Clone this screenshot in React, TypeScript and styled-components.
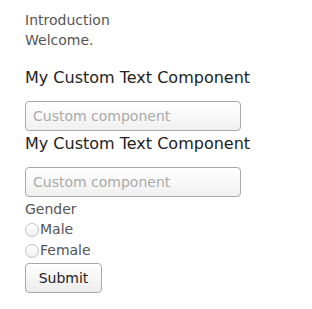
import React from 'react'
import styled, { createGlobalStyle } from 'styled-components'

const GlobalStyle = createGlobalStyle`
    body {
        margin: 0;
        background: #ffffff;
        font-family: 'DejaVu Sans', sans-serif;
    }
`

const Page = styled.div`
    display: flex;
    flex-direction: column;
    align-items: flex-start;
    padding: 10px 25px;
`

const Intro = styled.div`
    font-size: 14px;
    line-height: 20px;
    color: #555555;
`

const Title = styled.div<{ $top: number }>`
    font-size: 16px;
    line-height: 22px;
    color: #222222;
    margin-top: ${(p) => p.$top}px;
`

const TextInput = styled.input`
    box-sizing: border-box;
    width: 216px;
    height: 30px;
    margin-top: 12px;
    padding: 0 7px;
    border: 1px solid #a8a8a8;
    border-radius: 4px;
    background: linear-gradient(#ffffff, #f0f0f0);
    font-family: 'DejaVu Sans', sans-serif;
    font-size: 14px;
    color: #333333;
    &::placeholder {
        color: #aaaaaa;
    }
`

const Label = styled.div`
    font-size: 14px;
    line-height: 20px;
    color: #555555;
    margin-top: 2px;
`

const RadioRow = styled.label`
    display: flex;
    align-items: center;
    font-size: 14px;
    line-height: 21px;
    color: #555555;
`

const Radio = styled.input`
    appearance: none;
    box-sizing: border-box;
    width: 14px;
    height: 14px;
    margin: 1px 1px 0 0;
    border: 1px solid #c2c2c2;
    border-radius: 50%;
    background: linear-gradient(#ffffff, #f0f0f0);
`

const SubmitButton = styled.button`
    box-sizing: border-box;
    width: 77px;
    height: 30px;
    margin-top: 2px;
    border: 1px solid #a8a8a8;
    border-radius: 4px;
    background: linear-gradient(#ffffff, #ececec);
    font-family: 'DejaVu Sans', sans-serif;
    font-size: 14px;
    color: #222222;
`

const App: React.FC = () => {
    return (
        <>
            <GlobalStyle />
            <Page>
                <Intro>Introduction</Intro>
                <Intro>Welcome.</Intro>
                <Title $top={17}>My Custom Text Component</Title>
                <TextInput placeholder="Custom component" />
                <Title $top={2}>My Custom Text Component</Title>
                <TextInput placeholder="Custom component" />
                <Label>Gender</Label>
                <RadioRow>
                    <Radio type="radio" name="gender" />
                    Male
                </RadioRow>
                <RadioRow>
                    <Radio type="radio" name="gender" />
                    Female
                </RadioRow>
                <SubmitButton>Submit</SubmitButton>
            </Page>
        </>
    )
}

export default App
